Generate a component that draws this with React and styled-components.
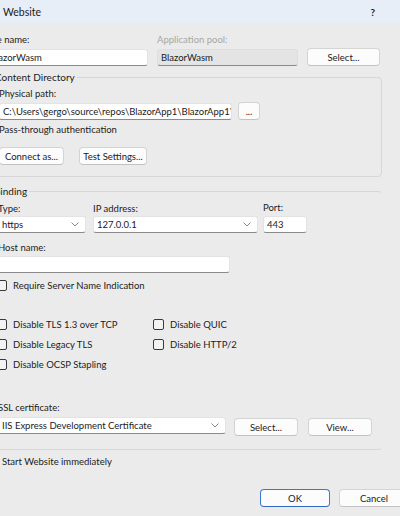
import React from 'react';
import styled, { createGlobalStyle } from 'styled-components';

const GlobalStyle = createGlobalStyle`
  html, body {
    margin: 0;
    padding: 0;
    background: #ebebeb;
    overflow: hidden;
  }
  body {
    font-family: Lato, "Noto Sans", sans-serif;
    font-size: 9.5px;
    color: #1b1b1b;
  }
`;

const Window = styled.div`
  width: 400px;
  height: 516px;
  overflow: hidden;
  background: #ebebeb;
`;

const TitleBar = styled.div`
  height: 23px;
  background: #e8eef7;
  display: flex;
  align-items: center;
  justify-content: space-between;
  padding: 0 25px 0 3px;
  font-size: 10.5px;
`;

const Help = styled.span`
  font-weight: 700;
  font-size: 10px;
`;

const Body = styled.div`
  margin-left: -14px;
  width: 396px;
  padding-top: 10px;
`;

const Row = styled.div`
  display: flex;
  align-items: ${p => p.$align || 'flex-end'};
  gap: ${p => p.$gap || 0}px;
  margin-top: ${p => p.$top || 0}px;
`;

const Field = styled.div`
  display: flex;
  flex-direction: column;
  width: ${p => p.$width}px;
`;

const Label = styled.div`
  line-height: 14px;
  margin-bottom: ${p => (p.$gap === undefined ? 1 : p.$gap)}px;
  margin-top: ${p => p.$top || 0}px;
  color: ${p => (p.$disabled ? '#a6a6a6' : '#1b1b1b')};
  white-space: nowrap;
`;

const TextBox = styled.div`
  box-sizing: border-box;
  height: 17px;
  width: ${p => (p.$width ? `${p.$width}px` : '100%')};
  background: ${p => (p.$readOnly ? '#e4e4e4' : '#ffffff')};
  border: 1px solid ${p => (p.$readOnly ? '#dedede' : '#e3e3e3')};
  border-bottom-color: #8a8a8a;
  border-radius: 3px;
  padding: 0 3px;
  display: flex;
  align-items: center;
  justify-content: space-between;
  white-space: nowrap;
  overflow: hidden;
`;

const Chevron = styled.svg`
  flex: none;
  width: 8px;
  height: 5px;
  margin-right: 3px;
`;

const Button = styled.button`
  box-sizing: border-box;
  height: 18px;
  width: ${p => p.$width}px;
  margin-top: ${p => p.$top || 0}px;
  margin-left: ${p => p.$left || 0}px;
  padding: 0;
  background: #fcfcfc;
  border: 1px solid ${p => (p.$primary ? '#3b78d2' : '#d4d4d4')};
  border-bottom-color: ${p => (p.$primary ? '#2f68c0' : '#c2c2c2')};
  border-radius: 4px;
  font: inherit;
  color: #1b1b1b;
  flex: none;
`;

const Fieldset = styled.fieldset`
  box-sizing: border-box;
  width: 396px;
  min-width: 0;
  margin: ${p => p.$top}px 0 0;
  padding: 3px 0 ${p => p.$bottom}px ${p => p.$left}px;
  border: 1px solid #d6d6d6;
  border-right-color: ${p => (p.$openRight ? 'transparent' : '#d6d6d6')};
  border-radius: 4px;
`;

const Legend = styled.legend`
  padding: 0 2px;
  margin-left: -6px;
  line-height: 14px;
  font-size: 10px;
`;

const Text = styled.div`
  line-height: 14px;
  margin-top: ${p => p.$top || 0}px;
  margin-left: ${p => p.$left || 0}px;
  white-space: nowrap;
`;

const CheckRow = styled.label`
  display: flex;
  align-items: center;
  gap: 6px;
  height: ${p => p.$height || 14}px;
  margin-left: -2px;
  margin-top: ${p => p.$top || 0}px;
  white-space: nowrap;
`;

const Box = styled.span`
  box-sizing: border-box;
  width: 11px;
  height: 11px;
  border: 1px solid #3a3a3a;
  border-radius: 2px;
  background: #f3f3f3;
  flex: none;
`;

const CheckGrid = styled.div`
  display: grid;
  grid-template-columns: 157px auto;
  grid-auto-rows: 20px;
  margin-top: 22px;
`;

const Footer = styled.div`
  display: flex;
  gap: 9px;
  margin-top: 20px;
  padding-left: 274px;
`;

const Select = ({ width, children }) => (
  <TextBox $width={width}>
    <span>{children}</span>
    <Chevron viewBox="0 0 8 5">
      <path d="M0.5 0.5 L4 4 L7.5 0.5" fill="none" stroke="#7a7a7a" strokeWidth="0.9" />
    </Chevron>
  </TextBox>
);

const Check = ({ children, height, top }) => (
  <CheckRow $height={height} $top={top}>
    <Box />
    {children}
  </CheckRow>
);

const App = () => (
  <Window>
    <GlobalStyle />
    <TitleBar>
      <span>Website</span>
      <Help>?</Help>
    </TitleBar>

    <Body>
      <Row $gap={9}>
        <Field $width={162}>
          <Label $gap={2}>Site name:</Label>
          <TextBox>BlazorWasm</TextBox>
        </Field>
        <Field $width={141}>
          <Label $gap={2} $disabled>Application pool:</Label>
          <TextBox $readOnly>BlazorWasm</TextBox>
        </Field>
        <Button $width={73}>Select...</Button>
      </Row>

      <Fieldset $top={4} $left={12} $bottom={11}>
        <Legend>Content Directory</Legend>
        <Label>Physical path:</Label>
        <Row $align="center" $gap={6}>
          <TextBox $width={233}>C:\Users\gergo\source\repos\BlazorApp1\BlazorApp1\bin</TextBox>
          <Button $width={22}>...</Button>
        </Row>
        <Text $top={3}>Pass-through authentication</Text>
        <Row $gap={15} $top={10}>
          <Button $width={65}>Connect as...</Button>
          <Button $width={68}>Test Settings...</Button>
        </Row>
      </Fieldset>

      <Fieldset $top={7} $left={11} $bottom={13} $openRight>
        <Legend>Binding</Legend>
        <Row $gap={0}>
          <Field $width={95}>
            <Label $gap={0}>Type:</Label>
            <Select width={88}>https</Select>
          </Field>
          <Field $width={170}>
            <Label $gap={0}>IP address:</Label>
            <Select width={165}>127.0.0.1</Select>
          </Field>
          <Field $width={44}>
            <Label $gap={1}>Port:</Label>
            <TextBox>443</TextBox>
          </Field>
        </Row>

        <Label $top={8}>Host name:</Label>
        <TextBox $width={232} />

        <Check top={5}>Require Server Name Indication</Check>

        <CheckGrid>
          <Check height={20}>Disable TLS 1.3 over TCP</Check>
          <Check height={20}>Disable QUIC</Check>
          <Check height={20}>Disable Legacy TLS</Check>
          <Check height={20}>Disable HTTP/2</Check>
          <Check height={20}>Disable OCSP Stapling</Check>
        </CheckGrid>

        <Label $top={27} $gap={2}>SSL certificate:</Label>
        <Row $align="flex-start" $gap={0}>
          <Select width={228}>IIS Express Development Certificate</Select>
          <Button $width={64} $top={1} $left={8}>Select...</Button>
          <Button $width={64} $top={1} $left={10}>View...</Button>
        </Row>
      </Fieldset>

      <Text $top={5} $left={16}>Start Website immediately</Text>

      <Footer>
        <Button $width={70} $primary>OK</Button>
        <Button $width={70}>Cancel</Button>
      </Footer>
    </Body>
  </Window>
);

export default App;
